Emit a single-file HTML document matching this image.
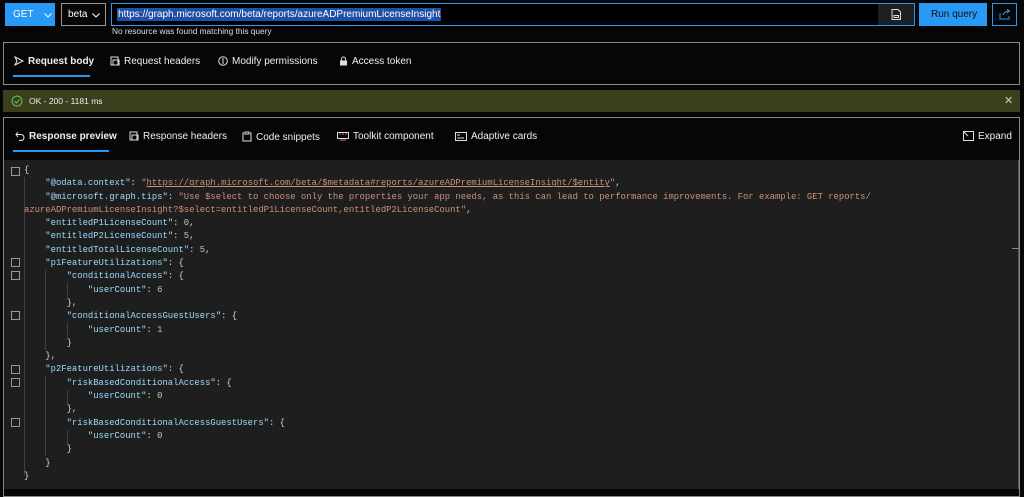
<!DOCTYPE html><html><head><style>
body{margin:0;width:1024px;height:489px;background:#060606;font-family:"Liberation Sans",sans-serif;color:#fff;position:relative;overflow:hidden}
.a{position:absolute;box-sizing:border-box}
.tab{position:absolute;font-size:10px;color:#eee;white-space:nowrap}
.tab svg{vertical-align:-2px;margin-right:4px}
pre{margin:0;font-family:"Liberation Mono",monospace;font-size:8.9px;line-height:13.3px;color:#9cdcfe}
.s{color:#ce9178}.n{color:#b5cea8}.p{color:#d4d4d4}.u{text-decoration:underline}
.box{position:absolute;left:11px;width:9px;height:9px;border:1px solid #999;box-sizing:border-box}
.g{position:absolute;width:1px;background:#404040}
</style></head><body>
<div class="a" style="left:5px;top:3px;width:50px;height:23px;background:#2899f5;font-size:10px;padding:6px 0 0 8px">GET<svg width="8" height="5" style="position:absolute;left:39px;top:10px"><path d="M.5.5l3.5 3.5 3.5-3.5" fill="none" stroke="#fff"/></svg></div>
<div class="a" style="left:61px;top:3px;width:45px;height:23px;border:1px solid #999;font-size:10px;padding:5px 0 0 6px">beta<svg width="8" height="5" style="position:absolute;left:30px;top:9px"><path d="M.5.5l3.5 3.5 3.5-3.5" fill="none" stroke="#fff"/></svg></div>
<div class="a" style="left:111px;top:3px;width:804px;height:23px;border:1px solid #2899f5;background:#000"><span style="position:absolute;left:5px;top:4px;background:#1f4fa6;font-size:10px;padding:1px 1px">https://graph.microsoft.com/beta/reports/azureADPremiumLicenseInsight</span>
<div class="a" style="right:0;top:0;width:36px;height:21px;background:#1f1f1f"><svg width="10" height="11" style="position:absolute;left:13px;top:5px"><path d="M1 .5h6l2.5 2.5v7.5h-8.5z M3 6.5h4.5v2H3z" fill="none" stroke="#ddd"/></svg></div></div>
<div class="a" style="left:919px;top:3px;width:68px;height:23px;background:#2899f5;font-size:10px;color:#111;padding:6px 0 0 12px">Run query</div>
<div class="a" style="left:992px;top:3px;width:25px;height:23px;border:1px solid #2899f5"><svg width="12" height="11" style="position:absolute;left:6px;top:5px"><path d="M1 4v6h9V7 M4 6c1-3 3-4 6-4M8 0l2.5 2L8 4" fill="none" stroke="#2899f5"/></svg></div>
<div class="a" style="left:112px;top:26px;font-size:8.3px;color:#ddd">No resource was found matching this query</div>

<div class="a" style="left:3px;top:42px;width:1017px;height:43px;border:1px solid #888"></div>
<div class="tab" style="left:14px;top:56px;font-weight:bold"><svg width="10" height="10"><path d="M1 1l8 4-8 4 2-4z" fill="none" stroke="#eee"/></svg>Request body</div>
<div class="a" style="left:13px;top:75px;width:77px;height:2px;background:#2899f5"></div>
<div class="tab" style="left:110px;top:56px"><svg width="10" height="10"><rect x="1" y="1" width="7" height="8" fill="none" stroke="#ddd"/><rect x="3" y="4" width="6" height="5" fill="none" stroke="#ddd"/></svg>Request headers</div>
<div class="tab" style="left:218px;top:56px"><svg width="10" height="10"><circle cx="5" cy="5" r="4.3" fill="none" stroke="#ddd"/><path d="M5 2v6" stroke="#ddd"/></svg>Modify permissions</div>
<div class="tab" style="left:339px;top:56px"><svg width="9" height="10"><rect x="1" y="4.5" width="7" height="5" fill="#ddd"/><path d="M2.5 4.5V3a2 2 0 0 1 4 0v1.5" fill="none" stroke="#ddd"/></svg>Access token</div>

<div class="a" style="left:3px;top:90px;width:1017px;height:22px;background:#3b3f1e"></div>
<svg class="a" style="left:11px;top:95px" width="12" height="12"><circle cx="6" cy="6" r="5" fill="none" stroke="#6cc04a"/><path d="M3.5 6l2 2 3-3.5" fill="none" stroke="#6cc04a"/></svg>
<div class="a" style="left:29px;top:96px;font-size:8.5px;color:#eee">OK - 200 - 1181 ms</div>
<div class="a" style="left:1004px;top:94px;font-size:11px;color:#ccc">&#10005;</div>

<div class="a" style="left:3px;top:117px;width:1017px;height:380px;border:1px solid #888"></div>
<div class="tab" style="left:15px;top:131px;font-weight:bold"><svg width="10" height="10"><path d="M3 1L1 3.5 3 6M1 3.5h5a3 3 0 0 1 0 6H4" fill="none" stroke="#eee"/></svg>Response preview</div>
<div class="a" style="left:13px;top:150px;width:96px;height:2px;background:#2899f5"></div>
<div class="tab" style="left:129px;top:131px"><svg width="10" height="10"><rect x="1" y="1" width="7" height="8" fill="none" stroke="#ddd"/><rect x="3" y="4" width="6" height="5" fill="none" stroke="#ddd"/></svg>Response headers</div>
<div class="tab" style="left:242px;top:131px"><svg width="10" height="11"><path d="M2 2H1v8h8V2H8M3 1h4v2H3z" fill="none" stroke="#ddd"/></svg>Code snippets</div>
<div class="tab" style="left:337px;top:131px"><svg width="12" height="10"><rect x=".5" y="1.5" width="11" height="6" fill="none" stroke="#ddd"/><path d="M2 3h2M5 3h2M8 3h2M3 9h6" stroke="#d66"/></svg>Toolkit component</div>
<div class="tab" style="left:455px;top:131px"><svg width="12" height="10"><rect x=".5" y="1.5" width="11" height="8" fill="none" stroke="#ddd"/><path d="M2 4h3M2 7h7" stroke="#ddd"/></svg>Adaptive cards</div>
<div class="tab" style="left:963px;top:131px"><svg width="11" height="10"><rect x=".5" y=".5" width="10" height="9" fill="none" stroke="#ddd"/><path d="M1 1l4 4" stroke="#ddd"/></svg>Expand</div>

<div class="a" style="left:4px;top:160px;width:1015px;height:329px;background:#1e1e1e"></div>
<div class="a" style="left:1018px;top:160px;width:1px;height:329px;background:#555"></div>
<div class="a" style="left:1012px;top:248px;width:7px;height:1px;background:#888"></div>
<div class="box" style="top:167px"></div><div class="box" style="top:258px"></div><div class="box" style="top:271px"></div><div class="box" style="top:311px"></div><div class="box" style="top:365px"></div><div class="box" style="top:378px"></div><div class="box" style="top:418px"></div>
<div class="g" style="left:24px;top:177px;height:298px"></div>
<div class="g" style="left:45px;top:270px;height:80px"></div>
<div class="g" style="left:45px;top:376px;height:80px"></div>
<div class="g" style="left:67px;top:283px;height:14px"></div><div class="g" style="left:67px;top:323px;height:14px"></div>
<div class="g" style="left:67px;top:390px;height:14px"></div><div class="g" style="left:67px;top:430px;height:14px"></div>
<pre class="a" style="left:24px;top:164px"><span class="p">{</span>
    "@odata.context"<span class="p">: </span><span class="s">"<span class="u">https://graph.microsoft.com/beta/$metadata#reports/azureADPremiumLicenseInsight/$entity</span>"</span><span class="p">,</span>
    "@microsoft.graph.tips"<span class="p">: </span><span class="s">"Use $select to choose only the properties your app needs, as this can lead to performance improvements. For example: GET reports/</span>
<span class="s">azureADPremiumLicenseInsight?$select=entitledP1LicenseCount,entitledP2LicenseCount"</span><span class="p">,</span>
    "entitledP1LicenseCount"<span class="p">: </span><span class="n">0</span><span class="p">,</span>
    "entitledP2LicenseCount"<span class="p">: </span><span class="n">5</span><span class="p">,</span>
    "entitledTotalLicenseCount"<span class="p">: </span><span class="n">5</span><span class="p">,</span>
    "p1FeatureUtilizations"<span class="p">: {</span>
        "conditionalAccess"<span class="p">: {</span>
            "userCount"<span class="p">: </span><span class="n">6</span>
<span class="p">        },</span>
        "conditionalAccessGuestUsers"<span class="p">: {</span>
            "userCount"<span class="p">: </span><span class="n">1</span>
<span class="p">        }
    },</span>
    "p2FeatureUtilizations"<span class="p">: {</span>
        "riskBasedConditionalAccess"<span class="p">: {</span>
            "userCount"<span class="p">: </span><span class="n">0</span>
<span class="p">        },</span>
        "riskBasedConditionalAccessGuestUsers"<span class="p">: {</span>
            "userCount"<span class="p">: </span><span class="n">0</span>
<span class="p">        }
    }
}</span></pre>
</body></html>
